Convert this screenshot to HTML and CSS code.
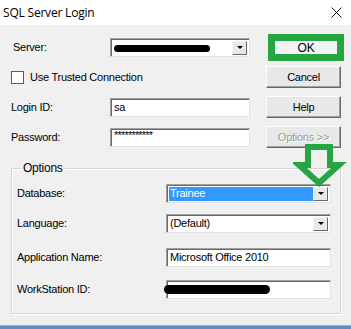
FILE: index.html
```html
<!DOCTYPE html>
<html lang="en">
<head>
    <title>SQL Server Login</title>
    <link rel="stylesheet" href="styles.css">
</head>
<body>

<div class="window">
    <div class="titlebar">
        <span class="title">SQL Server Login</span>
        <svg class="close" width="11" height="11" viewBox="0 0 11 11">
            <path d="M0.5 0.5 L10.5 10.5 M10.5 0.5 L0.5 10.5" stroke="#111" stroke-width="1" fill="none"/>
        </svg>
    </div>

    <div class="client">
        <div class="login-rows">
            <div class="row">
                <span class="lbl lbl-server">Server:</span>
                <div class="combo field">
                    <span class="value"><span class="redact redact-server"></span></span>
                    <span class="drop"><i class="tri"></i></span>
                </div>
                <button class="btn btn-ok">OK</button>
            </div>
            <div class="row">
                <label class="check-label"><span class="checkbox"></span>Use Trusted Connection</label>
                <button class="btn">Cancel</button>
            </div>
            <div class="row">
                <span class="lbl">Login ID:</span>
                <div class="textbox field">sa</div>
                <button class="btn">Help</button>
            </div>
            <div class="row">
                <span class="lbl">Password:</span>
                <div class="textbox field"><span class="stars">***********</span></div>
                <button class="btn btn-disabled">Options &gt;&gt;</button>
            </div>
        </div>

        <fieldset class="group">
            <legend>Options</legend>
            <div class="grow">
                <span class="glbl">Database:</span>
                <div class="combo gfield">
                    <span class="value selected">Trainee</span>
                    <span class="drop"><i class="tri"></i></span>
                </div>
            </div>
            <div class="grow">
                <span class="glbl">Language:</span>
                <div class="combo gfield">
                    <span class="value">(Default)</span>
                    <span class="drop"><i class="tri"></i></span>
                </div>
            </div>
            <div class="grow grow-app">
                <span class="glbl">Application Name:</span>
                <div class="textbox gfield">Microsoft Office 2010</div>
            </div>
            <div class="grow grow-ws">
                <span class="glbl">WorkStation ID:</span>
                <div class="textbox gfield"><span class="redact redact-ws"></span></div>
            </div>
        </fieldset>

        <!-- green annotation arrow drawn over the dialog -->
        <svg class="arrow" width="56" height="52" viewBox="0 0 56 52">
            <polygon points="15,6 37,6 37,24 46,24 26,42 6,24 15,24" fill="none" stroke="#25a643" stroke-width="6"/>
        </svg>
    </div>

    <div class="taskbar"></div>
</div>

</body>
</html>
```

FILE: styles.css
```css
:root {
    --face: #f0f0f0;
    --green: #25a643;
    --select: #3399ff;
}

html, body {
    margin: 0;
    padding: 0;
}

body {
    width: 351px;
    height: 329px;
    overflow: hidden;
    background-color: var(--face);
    font-family: 'Liberation Sans', Arial, sans-serif;
    font-size: 11px;
    letter-spacing: -0.25px;
    color: #000;
}

.window {
    display: flex;
    flex-direction: column;
    height: 329px;
}

.titlebar {
    height: 25px;
    flex: none;
    background-color: #fff;
    display: flex;
    align-items: center;
    justify-content: space-between;
    padding: 0 9px 0 3px;
}

.title {
    font-family: 'Open Sans', 'Noto Sans', sans-serif;
    font-size: 12px;
    letter-spacing: -0.2px;
    color: #000;
}

.close {
    display: block;
}

.client {
    position: relative;
    flex: 1;
    padding: 7px 10px 0 11px;
}

/* top rows */
.row {
    display: flex;
    align-items: center;
    height: 30px;
}

.lbl {
    width: 99px;
    flex: none;
}

.lbl-server {
    padding-left: 2px;
    width: 97px;
}

.field {
    width: 140px;
}

.textbox,
.combo {
    box-sizing: border-box;
    height: 19px;
    background-color: #fff;
    border: 1px solid;
    border-color: #a0a0a0 #e3e3e3 #e3e3e3 #a0a0a0;
    box-shadow: inset 1px 1px 0 #696969;
}

.textbox {
    padding: 0 3px;
    line-height: 17px;
    white-space: nowrap;
}

.combo {
    display: flex;
    align-items: stretch;
    padding: 2px 2px 1px 2px;
}

.combo .value {
    flex: 1;
    display: flex;
    align-items: center;
    padding-left: 1px;
    line-height: 13px;
    white-space: nowrap;
    overflow: hidden;
}

.combo .value.selected {
    background-color: var(--select);
    color: #fff;
}

.drop {
    width: 15px;
    flex: none;
    box-sizing: border-box;
    background-color: #e8e8e8;
    border: 1px solid;
    border-color: #f4f4f4 #696969 #696969 #f4f4f4;
    display: flex;
    align-items: center;
    justify-content: center;
}

.tri {
    width: 0;
    height: 0;
    border-left: 3px solid transparent;
    border-right: 3px solid transparent;
    border-top: 3px solid #000;
}

.stars {
    letter-spacing: -0.8px;
    position: relative;
    top: -2px;
}

.redact {
    display: inline-block;
    flex: none;
    background-color: #000;
    border-radius: 5px;
}

.redact-server {
    width: 96px;
    height: 7px;
    margin-top: 1px;
}

.redact-ws {
    width: 106px;
    height: 9px;
    margin-left: -6px;
    vertical-align: middle;
}

.check-label {
    display: flex;
    align-items: center;
    gap: 6px;
}

.checkbox {
    display: block;
    width: 11px;
    height: 11px;
    background-color: #fff;
    border: 1px solid #5c5c5c;
}

/* buttons */
.btn {
    box-sizing: border-box;
    width: 75px;
    height: 22px;
    margin-left: auto;
    padding: 0;
    font-family: inherit;
    font-size: 11px;
    letter-spacing: -0.25px;
    color: #000;
    background-color: #e8e8e8;
    border: 1px solid;
    border-color: #fff #696969 #696969 #fff;
    box-shadow: inset -1px -1px 0 #a0a0a0;
}

.btn-ok {
    width: 76px;
    height: 27px;
    margin-right: -3px;
    border: 7px solid var(--green);
    box-shadow: none;
    background-color: #f2f2f2;
    font-size: 12px;
}

.btn-disabled {
    color: #9a9a9a;
    text-shadow: 1px 1px 0 #fff;
}

/* options group */
.group {
    margin: 9px 0 0 0;
    padding: 3px 8px 9px 5px;
    min-inline-size: 0;
    border: 1px solid #d5d5d5;
    box-shadow: inset 1px 1px 0 #fff, 1px 1px 0 #fff;
    width: 330px;
    box-sizing: border-box;
}

.group legend {
    padding: 0 2px;
    margin-left: 4px;
    font-size: 12px;
    line-height: 14px;
}

.grow {
    display: flex;
    align-items: center;
    height: 30px;
}

.grow-app {
    margin-top: 4px;
}

.grow-ws {
    margin-top: 2px;
}

.glbl {
    width: 149px;
    flex: none;
}

.gfield {
    width: 165px;
}

.arrow {
    position: absolute;
    left: 293px;
    top: 116px;
    pointer-events: none;
}

.taskbar {
    height: 3px;
    flex: none;
    background-color: #5b8fc2;
    border-top: 1px solid #8fb4d8;
}
```
